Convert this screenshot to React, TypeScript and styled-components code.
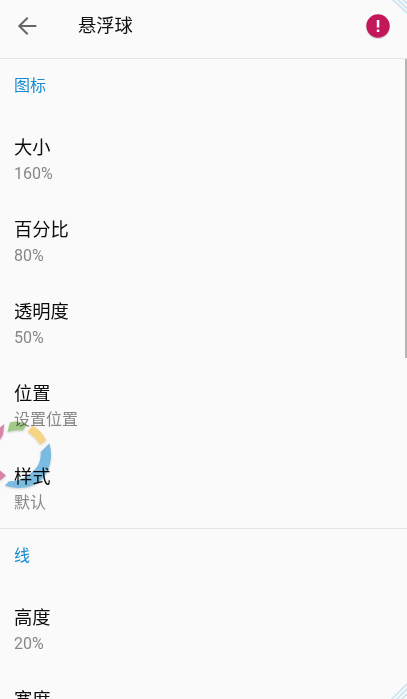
import React from "react";
import styled, { createGlobalStyle } from "styled-components";

const GlobalStyle = createGlobalStyle`
  * { box-sizing: border-box; }
  html, body { margin: 0; background: #fafafa; overflow: hidden; }
  body { font-family: Roboto, "Noto Sans CJK SC", sans-serif; }
`;

const Screen = styled.div`
  position: relative;
  width: 100%;
  height: 100vh;
  overflow: hidden;
  background: #fafafa;
`;

const AppBar = styled.header`
  display: flex;
  align-items: center;
  height: 59px;
  padding: 0 17px 7px;
  border-bottom: 1px solid #e4e4e4;
`;

const BackIcon = styled.svg`
  width: 20px;
  height: 20px;
  flex: none;
`;

const Title = styled.h1`
  flex: 1;
  margin: 0 0 0 41px;
  font-size: 18.3px;
  line-height: 26px;
  font-weight: 400;
  color: #111;
`;

const AlertIcon = styled.svg`
  width: 28px;
  height: 28px;
  margin-right: -2px;
  overflow: visible;
`;

const Section = styled.section`
  & + & { border-top: 1px solid #e4e4e4; }
`;

const SectionTitle = styled.h2`
  margin: 0;
  height: 57.6px;
  padding: 14px 14px 0;
  font-size: 16px;
  line-height: 26px;
  font-weight: 400;
  color: #168bd0;
`;

const Item = styled.div`
  height: 82.3px;
  padding: 17px 14px 0;
`;

const ItemTitle = styled.div`
  font-size: 18.3px;
  line-height: 27px;
  color: #0c0c0c;
`;

const Summary = styled.div`
  font-size: 16px;
  line-height: 26px;
  color: #878787;
`;

const ScrollThumb = styled.div`
  position: absolute;
  top: 59px;
  right: 0;
  width: 2px;
  height: 299px;
  background: #b4b4b4;
`;

const FloatingBall = styled.svg`
  position: absolute;
  left: 0;
  top: 416px;
  width: 56px;
  height: 78px;
  mix-blend-mode: multiply;
  filter: drop-shadow(0 1px 1px rgba(0, 0, 0, 0.16));
`;

const CornerStripes = styled.svg<{ $edge: "top" | "bottom" }>`
  position: absolute;
  right: 0;
  ${(p) => p.$edge}: 0;
  width: 16px;
  height: 16px;
`;

const sections = [
  {
    title: "图标",
    items: [
      ["大小", "160%"],
      ["百分比", "80%"],
      ["透明度", "50%"],
      ["位置", "设置位置"],
      ["样式", "默认"],
    ],
  },
  {
    title: "线",
    items: [
      ["高度", "20%"],
      ["宽度", "100%"],
    ],
  },
];

export default function App() {
  return (
    <Screen>
      <GlobalStyle />
      <AppBar>
        <BackIcon viewBox="0 0 20 20" fill="none" stroke="#666" strokeWidth="2">
          <path d="M19.3 10H2.5M10.7 1.7L2.3 10l8.4 8.3" />
        </BackIcon>
        <Title>悬浮球</Title>
        <AlertIcon viewBox="0 0 28 28">
          <circle cx="14" cy="15.3" r="11.8" fill="#000" opacity="0.14" />
          <circle cx="14" cy="14" r="11.7" fill="#c2185b" />
          <path d="M12.8 8h2.5v7.6h-2.5zM12.8 17.4h2.5v2.5h-2.5z" fill="#fff" />
        </AlertIcon>
      </AppBar>
      {sections.map((section) => (
        <Section key={section.title}>
          <SectionTitle>{section.title}</SectionTitle>
          {section.items.map(([name, value]) => (
            <Item key={name}>
              <ItemTitle>{name}</ItemTitle>
              <Summary>{value}</Summary>
            </Item>
          ))}
        </Section>
      ))}
      <ScrollThumb />
      <FloatingBall viewBox="0 416 56 78">
        <path d="M0 427.5L4.3 424L3 434.5L0 440z" fill="#dc86ae" />
        <path d="M0 470.5L6 475.5L0 480.8z" fill="#dc86ae" />
        <path d="M10 422.5Q18 419.5 26.7 424.7L22.8 430.4Q15 429.5 7.5 432z" fill="#a4cd8a" />
        <path d="M32.3 425.5Q41 430 46.2 440.2L40 444.6Q35 436 27.7 432z" fill="#fbd988" />
        <path d="M49.3 443.5C53.5 457 50 471 41 480C32 488.5 17 490 5 485.5L9 481.3C23 481 32 474 37.5 466C40 462 41 457 40.7 452z" fill="#7bbfe6" />
      </FloatingBall>
      <CornerStripes $edge="top" viewBox="0 0 16 16" stroke="#cde5f0" strokeWidth="1.8">
        <path d="M1 -1L17 14M6 -1L17 9.5M11 -1L17 4.5" />
      </CornerStripes>
      <CornerStripes $edge="bottom" viewBox="0 0 16 16" stroke="#cde5f0" strokeWidth="1.8">
        <path d="M0 17L17 0M5 17L17 5M10 17L17 10" />
      </CornerStripes>
    </Screen>
  );
}
